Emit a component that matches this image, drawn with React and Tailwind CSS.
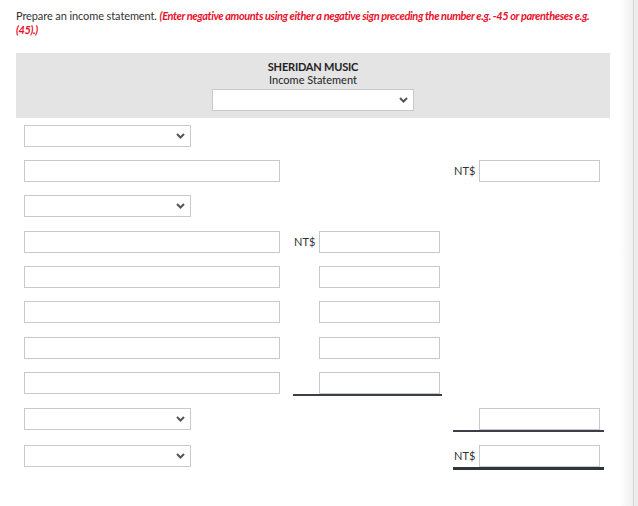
import React from "react";

const Chevron = () => (
  <svg width="9" height="6" viewBox="0 0 9 6" className="shrink-0">
    <path d="M1 1 L4.5 4.5 L8 1" fill="none" stroke="#555" strokeWidth="2" />
  </svg>
);

const Select = ({ w = "w-[167px]" }) => (
  <div className={`${w} h-[22px] border border-[#c9c9c9] bg-white flex items-center justify-end pr-[5px]`}>
    <Chevron />
  </div>
);

const Input = ({ w = "w-[121px]" }) => (
  <div className={`${w} h-[22px] border border-[#c9c9c9] bg-white`} />
);

const Label = ({ text }) => (
  <span className="w-[26px] text-[11px] leading-[22px] text-[#333] pl-[1px]">{text}</span>
);

// mid column: 294-443, right column: 454-605
const MidCell = ({ label, line }) => (
  <div className={`w-[149px] flex ${line ? "h-[24px] border-b-2 border-[#3a4046]" : ""}`}>
    <Label text={label} />
    <Input />
  </div>
);

const RightCell = ({ label, line }) => (
  <div
    className={`w-[151px] flex ${
      line === "single" ? "h-[24px] border-b-2 border-[#3a4046]" : ""
    } ${line === "double" ? "h-[25px] border-b-[3px] border-[#2f353b]" : ""}`}
  >
    <Label text={label} />
    <Input />
  </div>
);

const Row = ({ mt, children }) => (
  <div className={`flex items-start ${mt}`}>{children}</div>
);

export default function App() {
  return (
    <div className="flex min-h-[506px] bg-white" style={{ fontFamily: "Lato, 'Open Sans', sans-serif" }}>
      <div className="flex-1 pl-4 pt-[9px]">
        <p className="w-[594px] text-[11px] leading-[14px] text-[#333] tracking-[-0.1px]">
          Prepare an income statement.{" "}
          <span className="text-[#e8112d] italic font-bold tracking-[-0.4px]">
            (Enter negative amounts using either a negative sign preceding the number e.g. -45 or parentheses e.g. (45).)
          </span>
        </p>

        <div className="w-[594px] mt-[16px] bg-[#e4e4e4] pt-[7px] pb-[7px] flex flex-col items-center">
          <div className="text-[11px] leading-[13px] font-bold text-[#222] tracking-[-0.2px]">SHERIDAN MUSIC</div>
          <div className="text-[11px] leading-[13px] text-[#222]">Income Statement</div>
          <div className="mt-[3px]">
            <Select w="w-[202px]" />
          </div>
        </div>

        <div className="pl-[8px] mt-[7px] flex flex-col">
          <Row mt="">
            <Select />
          </Row>
          <Row mt="mt-[13px]">
            <div className="w-[269px]"><Input w="w-[256px]" /></div>
            <div className="w-[160px]" />
            <RightCell label="NT$" />
          </Row>
          <Row mt="mt-[13px]">
            <Select />
          </Row>
          <Row mt="mt-[14px]">
            <div className="w-[269px]"><Input w="w-[256px]" /></div>
            <MidCell label="NT$" />
          </Row>
          <Row mt="mt-[13px]">
            <div className="w-[269px]"><Input w="w-[256px]" /></div>
            <MidCell label="" />
          </Row>
          <Row mt="mt-[13px]">
            <div className="w-[269px]"><Input w="w-[256px]" /></div>
            <MidCell label="" />
          </Row>
          <Row mt="mt-[14px]">
            <div className="w-[269px]"><Input w="w-[256px]" /></div>
            <MidCell label="" />
          </Row>
          <Row mt="mt-[13px]">
            <div className="w-[269px]"><Input w="w-[256px]" /></div>
            <MidCell label="" line />
          </Row>
          <Row mt="mt-[12px]">
            <div className="w-[269px]"><Select /></div>
            <div className="w-[160px]" />
            <RightCell label="" line="single" />
          </Row>
          <Row mt="mt-[13px]">
            <div className="w-[269px]"><Select /></div>
            <div className="w-[160px]" />
            <RightCell label="NT$" line="double" />
          </Row>
        </div>
      </div>
      <div className="w-[14px] bg-gradient-to-r from-white to-[#f0f0f0]" />
      <div className="w-[1px] bg-[#d6d6d6]" />
      <div className="w-[4px] bg-[#ececec]" />
    </div>
  );
}
